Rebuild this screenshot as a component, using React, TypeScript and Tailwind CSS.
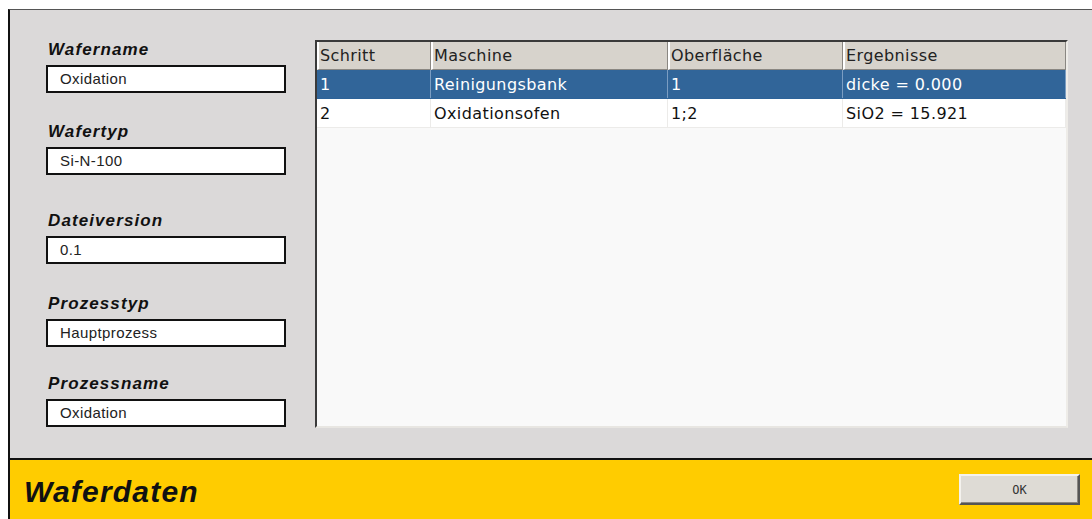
const fields = [
  { label: "Wafername", value: "Oxidation", gap: "mt-0" },
  { label: "Wafertyp", value: "Si-N-100", gap: "mt-[30px]" },
  { label: "Dateiversion", value: "0.1", gap: "mt-[37px]" },
  { label: "Prozesstyp", value: "Hauptprozess", gap: "mt-[31px]" },
  { label: "Prozessname", value: "Oxidation", gap: "mt-[28px]" },
];

const columns = [
  { title: "Schritt", width: "w-[114px]" },
  { title: "Maschine", width: "w-[237px]" },
  { title: "Oberfläche", width: "w-[175px]" },
  { title: "Ergebnisse", width: "flex-1" },
];

const steps = [
  ["1", "Reinigungsbank", "1", "dicke = 0.000"],
  ["2", "Oxidationsofen", "1;2", "SiO2 = 15.921"],
];

function Field({ label, value, gap }: { label: string; value: string; gap: string }) {
  return (
    <div className={`flex flex-col ${gap}`}>
      <span className="h-[18px] pl-[2px] text-[17px] leading-[18px] font-bold italic tracking-[1.1px] text-[#111]">
        {label}
      </span>
      <div className="mt-[6px] h-[28px] w-[240px] border-2 border-[#111] bg-white pl-[12px] text-[15px] leading-[24px] tracking-[0.4px] text-[#222]">
        {value}
      </div>
    </div>
  );
}

export default function App() {
  return (
    <div className="h-[519px] w-[1092px] overflow-hidden bg-white pl-[8px] pt-[9px] font-['Liberation_Sans',Arial,sans-serif]">
      <div className="flex h-[510px] w-[1100px] flex-col border-l-2 border-t border-l-[#111] border-t-[#555] bg-[#dbd9d9]">
        {/* form + step table */}
        <div className="flex h-[448px] pl-[36px] pt-[30px]">
          <div className="flex w-[269px] flex-col pt-[1px]">
            {fields.map((f) => (
              <Field key={f.label} label={f.label} value={f.value} gap={f.gap} />
            ))}
          </div>
          <div className="flex h-[388px] w-[753px] flex-col border-2 border-t-[#3a3a3a] border-l-[#3a3a3a] border-r-[#eeece8] border-b-[#e8e6e2] bg-[#f9f9f9] font-['DejaVu_Sans',Verdana,sans-serif] text-[16px] tracking-[0.4px]">
            <div className="flex h-[28px] bg-[#d7d3cc]">
              {columns.map((c) => (
                <div
                  key={c.title}
                  className={`${c.width} border-l-2 border-r border-b border-l-white border-r-[#8a8782] border-b-[#8a8782] pl-[1px] leading-[28px] text-[#222]`}
                >
                  {c.title}
                </div>
              ))}
            </div>
            {steps.map((row, i) => (
              <div
                key={row[0]}
                className={`flex h-[29px] border-b ${
                  i === 0 ? "border-[#2d6399] bg-[#316599] text-white" : "border-[#ecebe9] bg-white text-[#111]"
                }`}
              >
                {row.map((cell, j) => (
                  <div
                    key={j}
                    className={`${columns[j].width} border-r ${
                      i === 0 ? "border-[#7b9dc2]" : "border-[#ecebe9]"
                    } pl-[3px] leading-[29px]`}
                  >
                    {cell}
                  </div>
                ))}
              </div>
            ))}
          </div>
        </div>

        {/* footer bar */}
        <div className="flex h-[61px] items-center justify-between border-t-2 border-[#111] bg-[#ffcc00] pl-[14px] pr-[28px]">
          <span className="mt-[4px] text-[30px] font-bold italic tracking-[1.2px] text-[#111]">Waferdaten</span>
          <button className="h-[31px] w-[121px] border-2 border-t-[#f4f2ee] border-l-[#f4f2ee] border-r-[#555] border-b-[#555] bg-[#dedbd5] font-['DejaVu_Sans_Mono',monospace] text-[12px] text-[#333] shadow-[inset_-1px_-1px_0_#8a8782]">
            OK
          </button>
        </div>
      </div>
    </div>
  );
}
